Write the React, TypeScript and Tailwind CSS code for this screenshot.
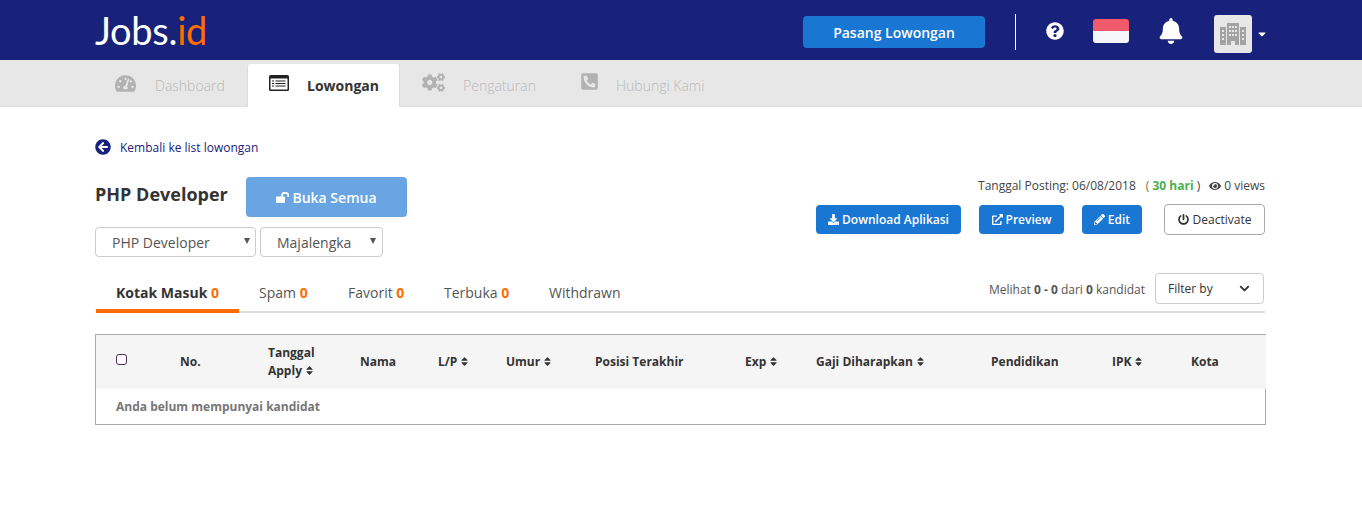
import { ChevronDown } from 'lucide-react';
import {
  FaArrowCircleLeft,
  FaBell,
  FaCaretDown,
  FaCogs,
  FaDownload,
  FaExternalLinkAlt,
  FaEye,
  FaPencilAlt,
  FaPhoneSquareAlt,
  FaPowerOff,
  FaQuestionCircle,
  FaSort,
  FaTachometerAlt,
} from 'react-icons/fa';

const columns = [
  { label: 'No.', width: 'w-[88px]' },
  { label: 'Tanggal Apply', width: 'w-[92px]', sort: true, wrap: true },
  { label: 'Nama', width: 'w-[78px]' },
  { label: 'L/P', width: 'w-[68px]', sort: true },
  { label: 'Umur', width: 'w-[89px]', sort: true },
  { label: 'Posisi Terakhir', width: 'w-[150px]' },
  { label: 'Exp', width: 'w-[71px]', sort: true },
  { label: 'Gaji Diharapkan', width: 'w-[175px]', sort: true },
  { label: 'Pendidikan', width: 'w-[121px]' },
  { label: 'IPK', width: 'w-[79px]', sort: true },
  { label: 'Kota', width: 'w-[60px]' },
];

const counters = [
  { label: 'Spam', count: 0, width: 'w-[89px]' },
  { label: 'Favorit', count: 0, width: 'w-[96px]' },
  { label: 'Terbuka', count: 0, width: 'w-[105px]' },
  { label: 'Withdrawn', width: 'w-[90px]' },
];

function ListIcon() {
  return (
    <svg width="20" height="16" viewBox="0 0 20 16" className="mr-[18px] -mt-[5px]">
      <rect x="0" y="0" width="20" height="16" rx="1.5" fill="#222" />
      <rect x="1.5" y="3.5" width="17" height="11" fill="#fff" />
      <path d="M3 6h2M3 8.5h2M3 11h2M6.5 6h10M6.5 8.5h10M6.5 11h10" stroke="#222" strokeWidth="1.2" />
    </svg>
  );
}

function BuildingIcon() {
  return (
    <svg width="26" height="22" viewBox="0 0 26 22" fill="#a3a3a3">
      <path d="M0 4h6v18H0zM7 0h12v22h-4v-4h-4v4H7zM20 4h6v18h-6z" />
      <path
        d="M2 7h2v2H2zM2 11h2v2H2zM2 15h2v2H2zM22 7h2v2h-2zM22 11h2v2h-2zM22 15h2v2h-2zM9 3h2v2H9zM12 3h2v2h-2zM15 3h2v2h-2zM9 7h2v2H9zM12 7h2v2h-2zM15 7h2v2h-2zM9 11h2v2H9zM12 11h2v2h-2zM15 11h2v2h-2z"
        fill="#e7e7e7"
      />
    </svg>
  );
}

function UnlockIcon() {
  return (
    <svg width="14" height="11" viewBox="0 0 14 11" fill="#fff">
      <rect x="0" y="4.5" width="9" height="6.5" rx="1" />
      <path d="M6 5V3.4C6 1.8 7.3.8 9 .8s3.2 1 3.2 2.6V5" fill="none" stroke="#fff" strokeWidth="1.7" />
    </svg>
  );
}

export default function App() {
  return (
    <div className="h-[526px] bg-white font-['Open_Sans',sans-serif] text-[#333] overflow-hidden">
      <header className="h-[60px] bg-[#19227a] flex items-center pl-[95px]">
        <div className="font-['Lato',sans-serif] text-[38px] leading-none text-white tracking-[-0.3px] w-[708px] -mt-[1px]">
          Jobs.<span className="text-[#ff6d00]">id</span>
        </div>
        <button className="w-[182px] h-[32px] mt-[4px] bg-[#1976d2] rounded text-white text-[14px] font-semibold">
          Pasang Lowongan
        </button>
        <div className="w-px h-[36px] bg-white ml-[30px] mt-[4px]" />
        <FaQuestionCircle className="text-white text-[18px] ml-[30px] mt-[2px]" />
        <div className="ml-[29px] mt-[2px] w-[36px] h-[24px] rounded-[3px] overflow-hidden flex flex-col">
          <div className="h-[12px] bg-[#f15a6a]" />
          <div className="h-[12px] bg-[#f5f6fa]" />
        </div>
        <FaBell className="text-white text-[26px] ml-[29px] mt-[2px]" />
        <div className="ml-[30px] mt-[8px] w-[38px] h-[38px] rounded-[3px] bg-[#e7e7e7] flex items-center justify-center">
          <BuildingIcon />
        </div>
        <FaCaretDown className="text-white text-[12px] ml-[4px] mt-[8px]" />
      </header>

      <nav className="h-[47px] bg-[#e7e7e7] border-b border-[#ddd] flex items-end pl-[95px] text-[14px] text-[#b9b9b9]">
        <div className="w-[152px] h-[46px] flex items-center pl-[20px] pt-[4px] font-light">
          <FaTachometerAlt className="text-[#b2b2b2] text-[21px] mr-[19px] -mt-[4px]" />
          Dashboard
        </div>
        <div className="w-[153px] h-[43px] -mb-px bg-white border-x border-[#ddd] rounded-t-[3px] flex items-center pl-[21px] font-bold text-[#333]">
          <ListIcon />
          Lowongan
        </div>
        <div className="w-[158px] h-[46px] flex items-center pl-[22px] pt-[4px] font-light">
          <FaCogs className="text-[#b2b2b2] text-[23px] mr-[18px] -mt-[6px]" />
          Pengaturan
        </div>
        <div className="h-[46px] flex items-center pl-[22px] pt-[4px] font-light">
          <FaPhoneSquareAlt className="text-[#b2b2b2] text-[19px] mr-[17px] -mt-[7px]" />
          Hubungi Kami
        </div>
      </nav>

      <main className="px-[95px] w-[1360px]">
        <a className="flex items-center h-[20px] mt-[31px] text-[12px] text-[#19227a]">
          <FaArrowCircleLeft className="text-[16px] mr-[9px] -mt-[3px]" />
          Kembali ke list lowongan
        </a>

        <div className="flex justify-between mt-[19px] h-[80px]">
          <div>
            <div className="flex items-center">
              <h1 className="text-[18px] font-bold text-[#333] w-[151px] -mt-[5px]">PHP Developer</h1>
              <button className="w-[161px] h-[40px] rounded bg-[#6aa5e3] text-white text-[14px] font-semibold flex items-center justify-center gap-[2px]">
                <UnlockIcon />
                Buka Semua
              </button>
            </div>
            <div className="flex gap-[4px] mt-[10px]">
              <div className="relative w-[161px] h-[30px] border border-[#ccc] rounded flex items-center pl-[16px] text-[14px] text-[#555]">
                PHP Developer
                <span className="absolute right-[5px] top-[10px] w-0 h-0 border-x-[3.5px] border-x-transparent border-t-[6px] border-t-[#555]" />
              </div>
              <div className="relative w-[123px] h-[30px] border border-[#ccc] rounded flex items-center pl-[16px] text-[14px] text-[#555]">
                Majalengka
                <span className="absolute right-[6px] top-[10px] w-0 h-0 border-x-[3.5px] border-x-transparent border-t-[6px] border-t-[#555]" />
              </div>
            </div>
          </div>
          <div className="flex flex-col items-end">
            <div className="text-[12px] text-[#444] flex items-center h-[18px]">
              Tanggal Posting: 06/08/2018
              <span className="ml-[10px]">
                <span className="text-[#8a6d3b]">(</span> <b className="text-[#4caf50]">30 hari</b> )
              </span>
              <FaEye className="ml-[9px] mr-[3px] text-[12px]" />0 views
            </div>
            <div className="flex items-center mt-[9px] text-[12px] font-semibold">
              <button className="w-[145px] h-[29px] bg-[#1976d2] rounded text-white flex items-center justify-center gap-[3px]">
                <FaDownload className="text-[11px]" />
                Download Aplikasi
              </button>
              <button className="w-[85px] h-[29px] ml-[18px] bg-[#1976d2] rounded text-white flex items-center justify-center gap-[3px]">
                <FaExternalLinkAlt className="text-[11px]" />
                Preview
              </button>
              <button className="w-[60px] h-[29px] ml-[18px] bg-[#1976d2] rounded text-white flex items-center justify-center gap-[3px]">
                <FaPencilAlt className="text-[11px]" />
                Edit
              </button>
              <button className="w-[101px] h-[31px] ml-[22px] bg-white border border-[#aaa] rounded text-[#333] font-normal flex items-center justify-center gap-[4px]">
                <FaPowerOff className="text-[11px]" />
                Deactivate
              </button>
            </div>
          </div>
        </div>

        <div className="mt-[16px] h-[40px] flex justify-between items-start border-b-2 border-[#ddd] w-[1169px] ml-px">
          <div className="flex text-[14px] text-[#555]">
            <div className="w-[143px] h-[40px] pl-[20px] pt-[9px] border-b-[4px] border-[#ff6d00] font-bold text-[#333]">
              Kotak Masuk <span className="text-[#ff6d00]">0</span>
            </div>
            <div className="w-[20px]" />
            {counters.map(c => (
              <div key={c.label} className={`${c.width} pt-[9px]`}>
                {c.label}
                {c.count !== undefined && (
                  <span className="text-[#ff6d00] font-bold"> {c.count}</span>
                )}
              </div>
            ))}
          </div>
          <div className="flex items-center mr-px">
            <div className="text-[12px] text-[#555] mr-[10px] mt-[2px]">
              Melihat <b>0 - 0</b> dari <b>0</b> kandidat
            </div>
            <div className="w-[109px] h-[31px] border border-[#ccc] rounded flex items-center justify-between pl-[12px] pr-[11px] text-[12px] text-[#333]">
              Filter by
              <ChevronDown className="w-[15px] h-[15px]" strokeWidth={3} />
            </div>
          </div>
        </div>

        <div className="mt-[21px] w-[1171px] border-l border-t border-b border-[#aaa]">
          <div className="h-[54px] bg-[#f5f5f5] flex items-center pl-[20px] text-[12px] font-bold text-[#333]">
            <span className="w-[11px] h-[11px] border border-[#4a2a5a] rounded-[3px] bg-white mr-[53px] -mt-[5px]" />
            {columns.map(col => (
              <div key={col.label} className={`${col.width} shrink-0 leading-[18px] ${col.wrap ? 'pr-[20px]' : ''}`}>
                {col.label}
                {col.sort && <FaSort className="inline ml-[2px] text-[11px] -mt-[2px]" />}
              </div>
            ))}
          </div>
          <div className="h-[35px] border-r border-[#aaa] flex items-center pl-[20px] text-[12px] font-bold text-[#777]">
            Anda belum mempunyai kandidat
          </div>
        </div>
      </main>
    </div>
  );
}
